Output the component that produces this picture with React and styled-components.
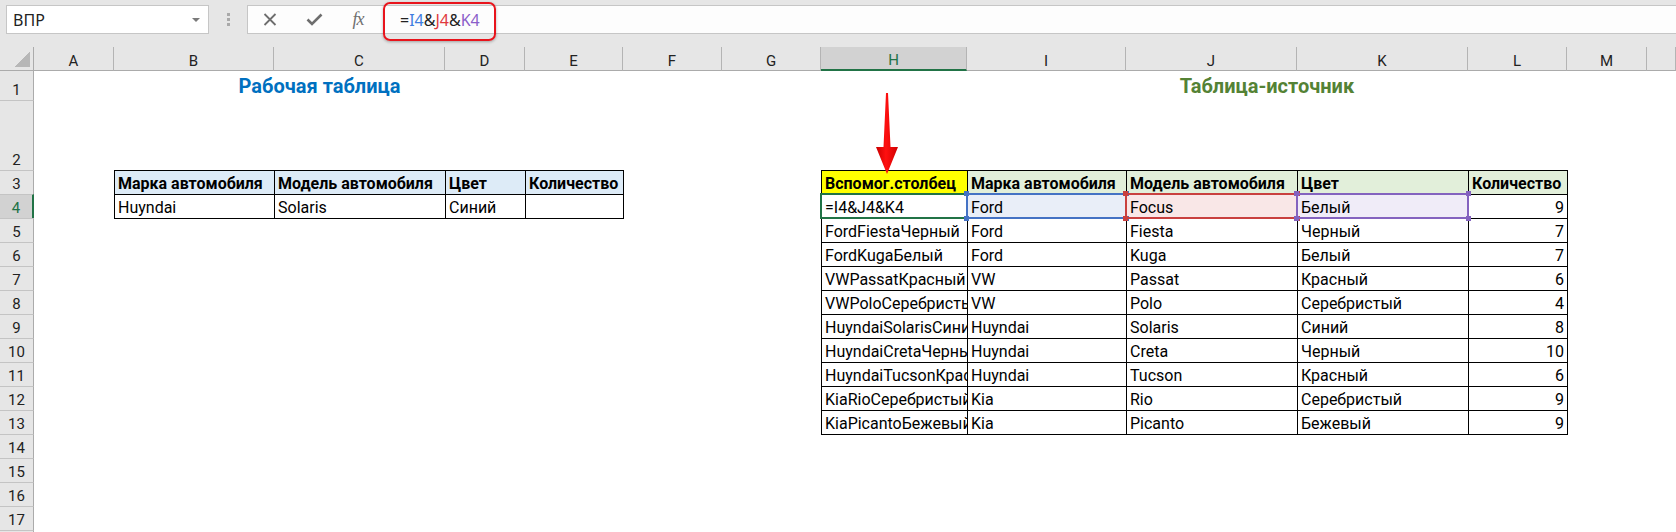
import React from 'react'
import styled, { createGlobalStyle } from 'styled-components'

const GlobalStyle = createGlobalStyle`
  * { box-sizing: border-box; }
  html, body { margin: 0; padding: 0; background: #fff; }
  body { overflow: hidden; font-family: Roboto, "Liberation Sans", sans-serif; }
`

// column widths A..M, N takes the rest
const COLS = [80, 160, 171, 80, 98, 99, 99, 146, 159, 171, 171, 99, 80]
const LETTERS = 'ABCDEFGHIJKLM'.split('')
const ROWS = [29, 70, ...Array(16).fill(24)]
const colTrack = COLS.map((w) => `${w}px`).join(' ') + ' 1fr'
const rowTrack = ROWS.map((h) => `${h}px`).join(' ')

const MARKS = {
  sel: { line: '#217346' },
  blue: { line: '#4472c4', fill: '#e9eef8' },
  red: { line: '#c9403f', fill: '#f9e7e7' },
  purple: { line: '#8463bf', fill: '#f0ecf8' },
}

const leftHead = ['Марка автомобиля', 'Модель автомобиля', 'Цвет', 'Количество']
const leftRows = [['Huyndai', 'Solaris', 'Синий', '']]

const rightHead = ['Вспомог.столбец', 'Марка автомобиля', 'Модель автомобиля', 'Цвет', 'Количество']
const rightRows = [
  ['=I4&J4&K4', 'Ford', 'Focus', 'Белый', 9],
  ['FordFiestaЧерный', 'Ford', 'Fiesta', 'Черный', 7],
  ['FordKugaБелый', 'Ford', 'Kuga', 'Белый', 7],
  ['VWPassatКрасный', 'VW', 'Passat', 'Красный', 6],
  ['VWPoloСеребристый', 'VW', 'Polo', 'Серебристый', 4],
  ['HuyndaiSolarisСиний', 'Huyndai', 'Solaris', 'Синий', 8],
  ['HuyndaiCretaЧерный', 'Huyndai', 'Creta', 'Черный', 10],
  ['HuyndaiTucsonКрасный', 'Huyndai', 'Tucson', 'Красный', 6],
  ['KiaRioСеребристый', 'Kia', 'Rio', 'Серебристый', 9],
  ['KiaPicantoБежевый', 'Kia', 'Picanto', 'Бежевый', 9],
]
const rowMarks = ['sel', 'blue', 'red', 'purple', null]

const Window = styled.div`
  width: 1676px;
  height: 532px;
  overflow: hidden;
  display: flex;
  flex-direction: column;
`

/* ---------- formula bar ---------- */
const TopBar = styled.div`
  flex: none;
  height: 47px;
  background: #e6e6e6;
  display: flex;
  align-items: flex-start;
  padding: 5px 0 0 6px;
  font-family: "Noto Sans", "Open Sans", sans-serif;
`

const NameBox = styled.div`
  width: 203px;
  height: 29px;
  border: 1px solid #c6c6c6;
  background: #fff;
  display: flex;
  align-items: center;
  justify-content: space-between;
  padding: 0 8px 0 6px;
  font-size: 16px;
  color: #222;
`

const Caret = styled.span`
  width: 0;
  height: 0;
  border-left: 4px solid transparent;
  border-right: 4px solid transparent;
  border-top: 4px solid #7a7a7a;
`

const Grip = styled.div`
  width: 38px;
  height: 29px;
  display: flex;
  flex-direction: column;
  align-items: center;
  justify-content: center;
  gap: 2px;
`

const GripDot = styled.span`
  width: 3px;
  height: 3px;
  background: #a9a9a9;
`

const FormulaBox = styled.div`
  flex: 1;
  height: 29px;
  border: 1px solid #c6c6c6;
  border-right: none;
  background: #fdfdfd;
  display: flex;
  align-items: stretch;
`

const BarButton = styled.div`
  width: 44px;
  display: flex;
  align-items: center;
  justify-content: center;
  color: #6e6e6e;
`

const FxLabel = styled.span`
  font-family: "Liberation Serif", "DejaVu Serif", serif;
  font-style: italic;
  font-size: 18px;
  letter-spacing: -1px;
  color: #707070;
`

const FormulaField = styled.div`
  position: relative;
  display: flex;
  align-items: center;
  padding-left: 20px;
  font-size: 16px;
  color: #222;
`

const Ref = styled.span`
  color: ${(p) => p.$color};
`

const Callout = styled.div`
  position: absolute;
  left: 3px;
  top: -4px;
  width: 113px;
  height: 39px;
  border: 2px solid #e8141c;
  border-radius: 7px;
  box-shadow: 0 1px 3px rgba(0, 0, 0, 0.3);
`

/* ---------- sheet ---------- */
const Sheet = styled.div`
  flex: 1;
  display: grid;
  grid-template-columns: 34px ${colTrack};
  grid-template-rows: 24px ${rowTrack};
  overflow: hidden;
  background: #fff;
`

const Corner = styled.div`
  background: #e6e6e6;
  border-right: 1px solid #ababab;
  border-bottom: 1px solid #ababab;
  display: flex;
  align-items: flex-end;
  justify-content: flex-end;
  padding: 0 3px 3px 0;
`

const SelectAll = styled.div`
  width: 15px;
  height: 15px;
  background: linear-gradient(135deg, transparent 50%, #b7b7b7 50%);
`

const ColHead = styled.div`
  background: ${(p) => (p.$active ? '#d2d2d2' : '#e6e6e6')};
  color: ${(p) => (p.$active ? '#217346' : '#222')};
  border-right: 1px solid #b4b4b4;
  border-bottom: ${(p) => (p.$active ? '2px solid #217346' : '1px solid #ababab')};
  display: flex;
  align-items: flex-end;
  justify-content: center;
  font-size: 15px;
  line-height: 18px;
`

const RowHead = styled.div`
  grid-column: 1;
  background: ${(p) => (p.$active ? '#d2d2d2' : '#e6e6e6')};
  color: ${(p) => (p.$active ? '#217346' : '#222')};
  border-right: ${(p) => (p.$active ? '2px solid #217346' : '1px solid #ababab')};
  display: flex;
  align-items: flex-end;
  justify-content: center;
  font-size: 15px;
  line-height: 18px;
  padding-bottom: 1px;

  & + & {
    border-top: 1px solid #c4c4c4;
  }
`

const Body = styled.div`
  grid-column: 2 / -1;
  grid-row: 2 / -1;
  display: grid;
  grid-template-columns: ${colTrack};
  grid-template-rows: ${rowTrack};
`

const Title = styled.div`
  grid-column: ${(p) => p.$span};
  grid-row: 1;
  align-self: end;
  text-align: center;
  font-size: 20px;
  font-weight: 700;
  line-height: 24px;
  padding-bottom: 2px;
  color: ${(p) => p.$color};
`

const Table = styled.div`
  grid-column: ${(p) => p.$cols};
  grid-row: ${(p) => p.$rows};
  justify-self: start;
  align-self: start;
  display: grid;
  grid-template-columns: ${(p) => p.$widths};
  grid-auto-rows: 24px;
  border-top: 1px solid #000;
  border-left: 1px solid #000;
`

const Cell = styled.div`
  position: ${(p) => (p.$marked ? 'relative' : 'static')};
  border-right: 1px solid #000;
  border-bottom: 1px solid #000;
  background: ${(p) => p.$bg || '#fff'};
  font-size: 16px;
  font-weight: ${(p) => (p.$bold ? 700 : 400)};
  text-align: ${(p) => (p.$num ? 'right' : 'left')};
  color: #000;
`

const CellText = styled.div`
  height: 100%;
  padding: 3px 3px 0 3px;
  line-height: 20px;
  white-space: nowrap;
  overflow: hidden;
`

const Mark = styled.div`
  position: absolute;
  top: -2px;
  left: -2px;
  right: -1px;
  bottom: -1px;
  border: 2px solid ${(p) => p.$line};
  z-index: 1;
  pointer-events: none;
`

const Handle = styled.span`
  position: absolute;
  width: 5px;
  height: 5px;
  background: ${(p) => p.$line};
  ${(p) => p.$v}: -4px;
  ${(p) => p.$h}: -4px;
`

const Arrow = styled.svg`
  grid-column: 8;
  grid-row: 1 / 4;
  justify-self: start;
  align-self: start;
  margin: 22px 0 0 54px;
  z-index: 2;
`

const CloseIcon = () => (
  <svg width="14" height="13" viewBox="0 0 14 13">
    <path d="M1.5 1 L12.5 12 M12.5 1 L1.5 12" stroke="#6e6e6e" strokeWidth="1.8" fill="none" />
  </svg>
)

const CheckIcon = () => (
  <svg width="17" height="13" viewBox="0 0 17 13">
    <path d="M1.5 6.5 L6 11 L15.5 1.5" stroke="#6e6e6e" strokeWidth="2.6" fill="none" />
  </svg>
)

const RedArrow = () => (
  <Arrow width="24" height="81" viewBox="0 0 24 81">
    <defs>
      <linearGradient id="arrowFill" x1="0" x2="1" y1="0" y2="0">
        <stop offset="0" stopColor="#c80000" />
        <stop offset="0.45" stopColor="#ff1010" />
        <stop offset="1" stopColor="#d00000" />
      </linearGradient>
    </defs>
    <path d="M11 0 L13 0 L15.5 54 L23 54 L12 81 L1 54 L8.5 54 Z" fill="url(#arrowFill)" />
  </Arrow>
)

const DataCell = ({ value, mark, bg, bold, num }) => {
  const m = mark && MARKS[mark]
  return (
    <Cell $bg={m && m.fill ? m.fill : bg} $bold={bold} $num={num} $marked={!!m}>
      <CellText>{value}</CellText>
      {m && (
        <Mark $line={m.line}>
          {mark !== 'sel' &&
            ['top', 'bottom'].map((v) =>
              ['left', 'right'].map((h) => <Handle key={v + h} $v={v} $h={h} $line={m.line} />)
            )}
        </Mark>
      )}
    </Cell>
  )
}

const App = () => (
  <Window>
    <GlobalStyle />
    <TopBar>
      <NameBox>
        <span>ВПР</span>
        <Caret />
      </NameBox>
      <Grip>
        <GripDot />
        <GripDot />
        <GripDot />
      </Grip>
      <FormulaBox>
        <BarButton>
          <CloseIcon />
        </BarButton>
        <BarButton>
          <CheckIcon />
        </BarButton>
        <BarButton>
          <FxLabel>fx</FxLabel>
        </BarButton>
        <FormulaField>
          <Callout />
          =<Ref $color="#3f7ee0">I4</Ref>&amp;<Ref $color="#e0393e">J4</Ref>&amp;
          <Ref $color="#8b5fc9">K4</Ref>
        </FormulaField>
      </FormulaBox>
    </TopBar>

    <Sheet>
      <Corner>
        <SelectAll />
      </Corner>
      {LETTERS.map((l) => (
        <ColHead key={l} $active={l === 'H'}>
          {l}
        </ColHead>
      ))}
      <ColHead />
      {ROWS.map((_, i) => (
        <RowHead key={i} $active={i === 3}>
          {i + 1}
        </RowHead>
      ))}

      <Body>
        <Title $span="2 / 5" $color="#0070c0">
          Рабочая таблица
        </Title>
        <Title $span="9 / 13" $color="#548235">
          Таблица-источник
        </Title>

        <Table $cols="2 / 6" $rows="3 / 5" $widths="160px 171px 80px 98px">
          {leftHead.map((h) => (
            <DataCell key={h} value={h} bg="#ddebf7" bold />
          ))}
          {leftRows.map((r) => r.map((v, j) => <DataCell key={j} value={v} />))}
        </Table>

        <Table $cols="8 / 13" $rows="3 / 14" $widths="146px 159px 171px 171px 99px">
          {rightHead.map((h, j) => (
            <DataCell key={h + j} value={h} bg={j === 0 ? '#ffff00' : '#e2efda'} bold />
          ))}
          {rightRows.map((r, i) =>
            r.map((v, j) => (
              <DataCell key={i + '-' + j} value={v} num={j === 4} mark={i === 0 ? rowMarks[j] : null} />
            ))
          )}
        </Table>

        <RedArrow />
      </Body>
    </Sheet>
  </Window>
)

export default App
